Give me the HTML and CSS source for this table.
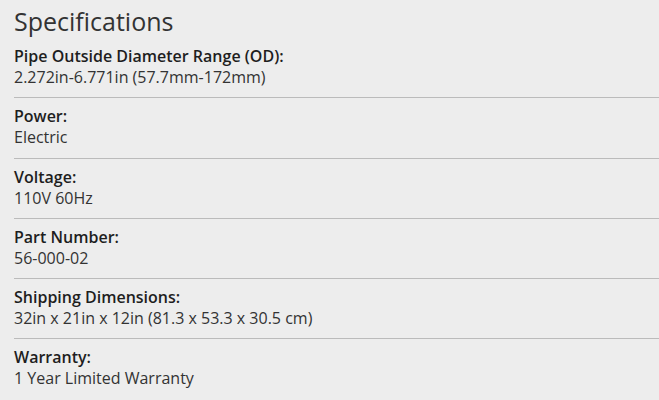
FILE: index.html
```html
<!DOCTYPE html>
<html lang="en">
<head>
    <meta charset="UTF-8">
    <meta name="viewport" content="width=device-width, initial-scale=1.0">
    <title>Specifications</title>
    <link rel="stylesheet" href="styles.css">
</head>
<body>
    <div class="specs">
        <h1>Specifications</h1>
        <div class="spec">
            <div class="label">Pipe Outside Diameter Range (OD):</div>
            <div class="value">2.272in-6.771in (57.7mm-172mm)</div>
        </div>
        <div class="spec">
            <div class="label">Power:</div>
            <div class="value">Electric</div>
        </div>
        <div class="spec">
            <div class="label">Voltage:</div>
            <div class="value">110V 60Hz</div>
        </div>
        <div class="spec">
            <div class="label">Part Number:</div>
            <div class="value">56-000-02</div>
        </div>
        <div class="spec">
            <div class="label">Shipping Dimensions:</div>
            <div class="value">32in x 21in x 12in (81.3 x 53.3 x 30.5 cm)</div>
        </div>
        <div class="spec">
            <div class="label">Warranty:</div>
            <div class="value">1 Year Limited Warranty</div>
        </div>
    </div>
</body>
</html>
```
FILE: styles.css
```css
body {
  margin: 0;
  background-color: #ededed;
  font-family: "Open Sans", "Liberation Sans", sans-serif;
  color: #222;
}

.specs {
  padding-left: 14px;
}

.specs h1 {
  margin: 5px 0 1px;
  font-size: 25px;
  line-height: 32px;
  font-weight: normal;
  color: #333;
}

.spec {
  padding: 8px 0 9px;
  border-bottom: 1px solid #bbb;
  font-size: 16px;
  line-height: 21.125px;
}

.spec:last-child {
  border-bottom: none;
}

.label {
  font-weight: 600;
  color: #1e1e1e;
}

.value {
  color: #333;
}
```
